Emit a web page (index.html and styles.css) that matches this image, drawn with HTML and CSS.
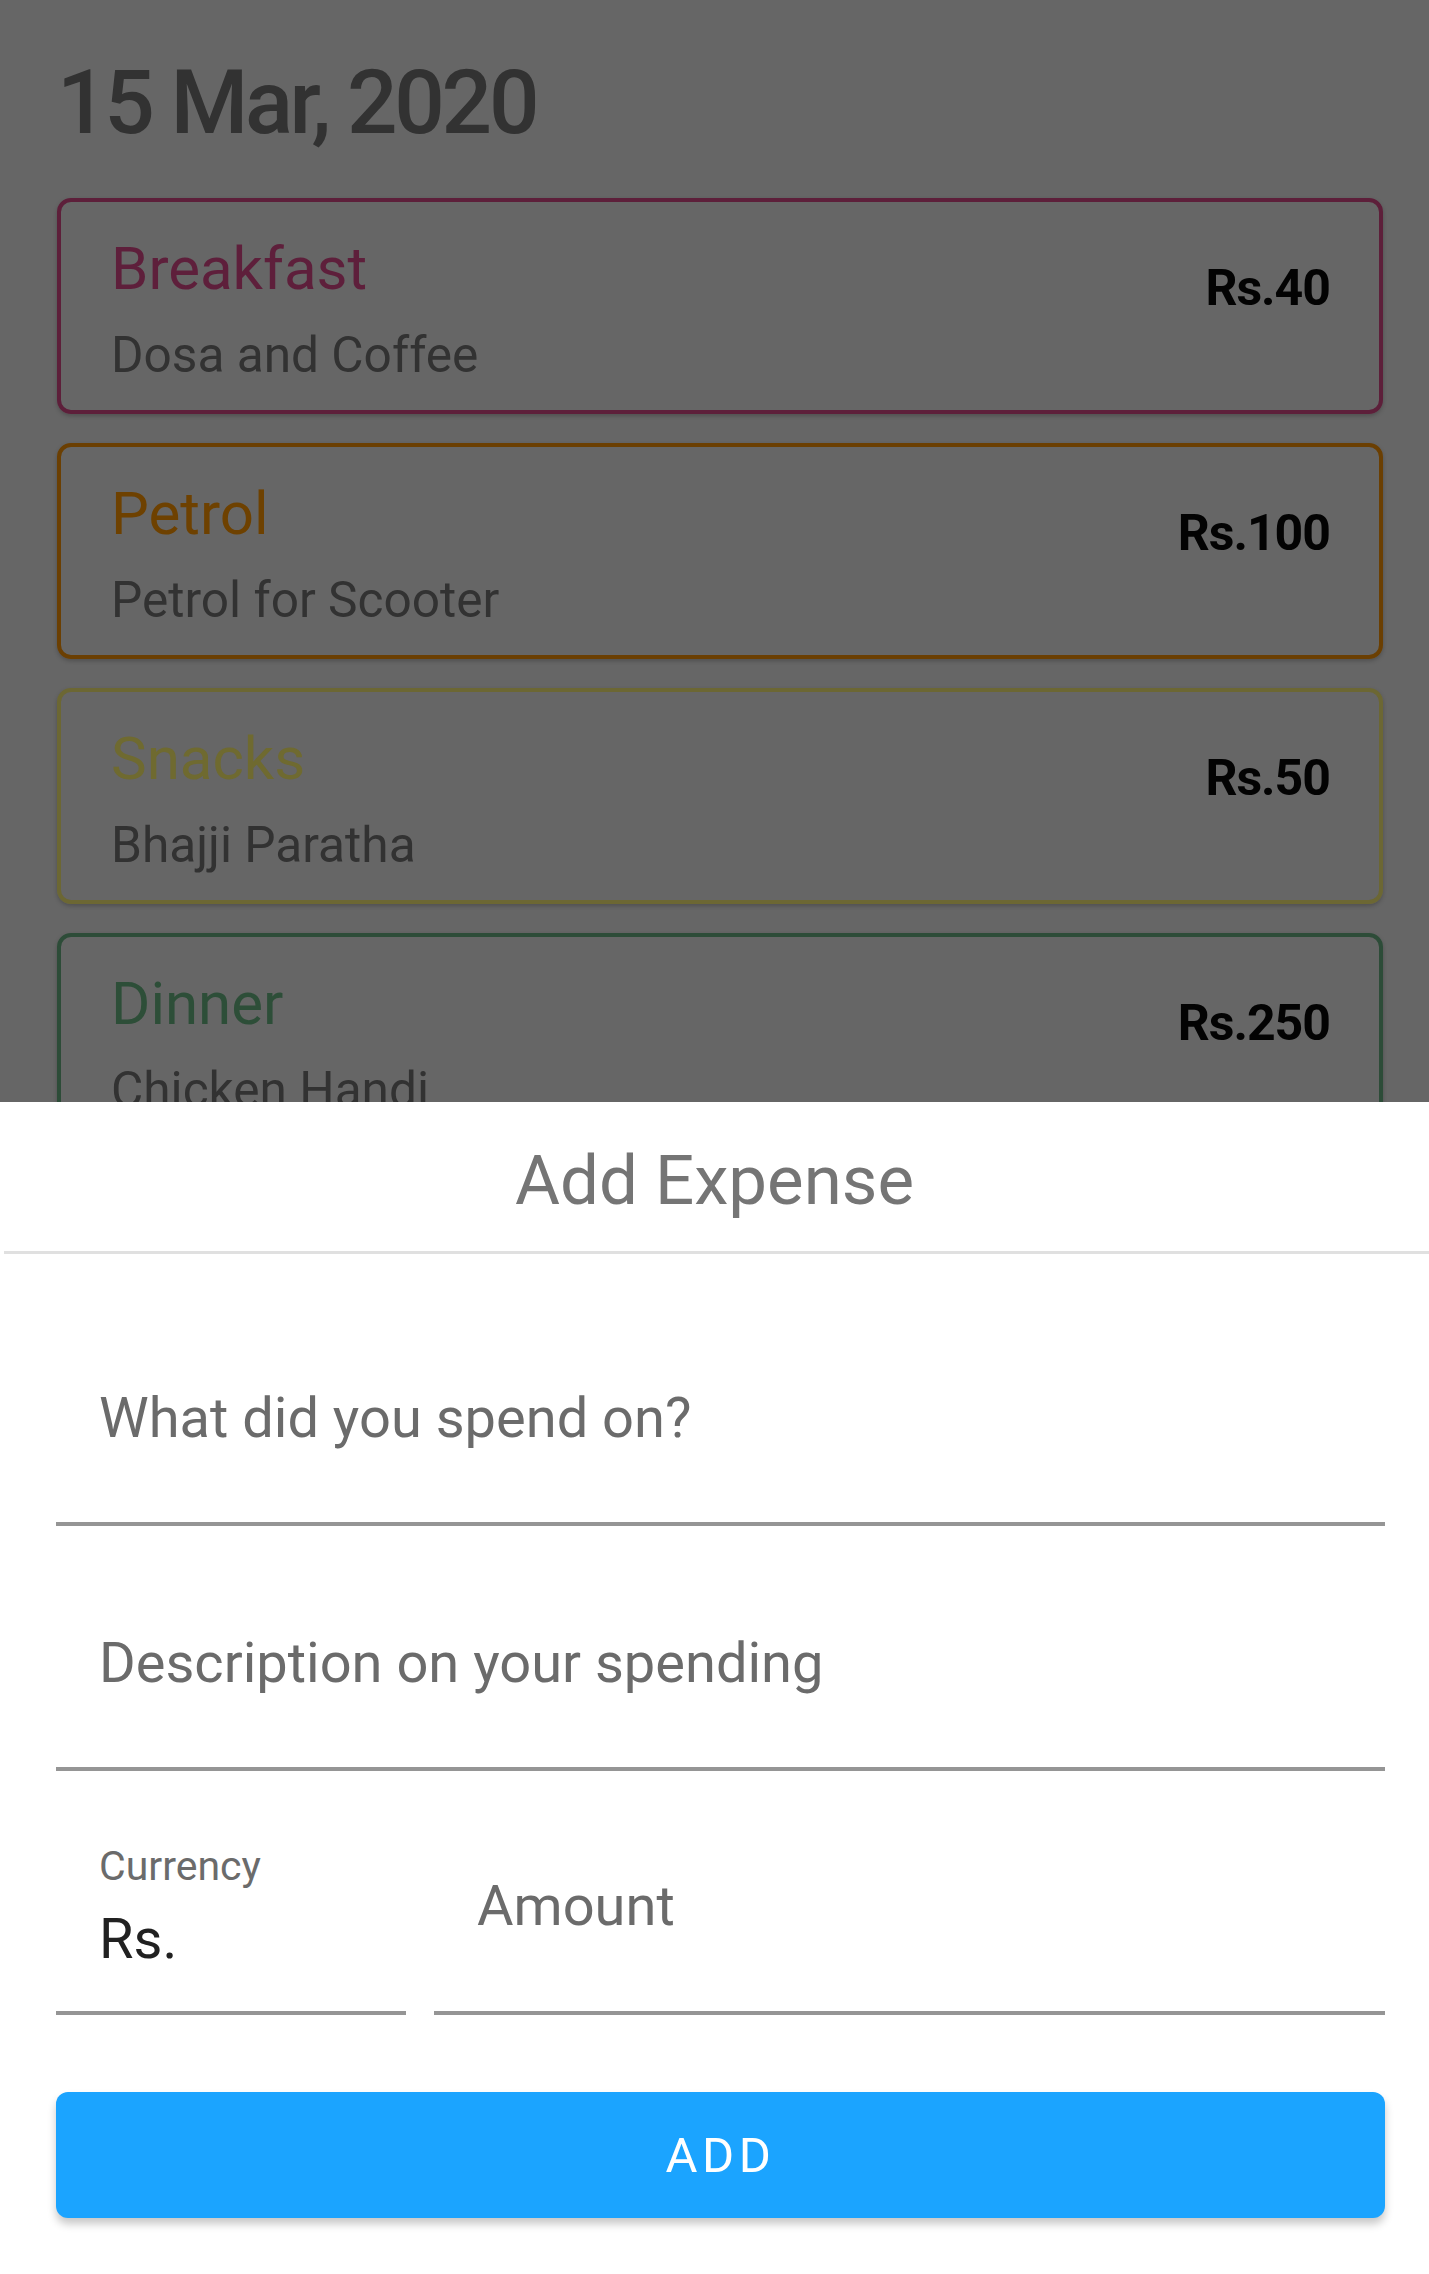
FILE: index.html
```html
<!DOCTYPE html>
<html lang="en">
<head>
<meta charset="utf-8">
<title>Expenses</title>
<link rel="stylesheet" href="styles.css">
</head>
<body>
<div class="screen">
  <section class="list-area">
    <h1 class="date">15 Mar, 2020</h1>
    <div class="cards">
      <div class="card card-breakfast">
        <div class="card-text">
          <div class="card-title">Breakfast</div>
          <div class="card-desc">Dosa and Coffee</div>
        </div>
        <div class="card-price">Rs.40</div>
      </div>
      <div class="card card-petrol">
        <div class="card-text">
          <div class="card-title">Petrol</div>
          <div class="card-desc">Petrol for Scooter</div>
        </div>
        <div class="card-price">Rs.100</div>
      </div>
      <div class="card card-snacks">
        <div class="card-text">
          <div class="card-title">Snacks</div>
          <div class="card-desc">Bhajji Paratha</div>
        </div>
        <div class="card-price">Rs.50</div>
      </div>
      <div class="card card-dinner">
        <div class="card-text">
          <div class="card-title">Dinner</div>
          <div class="card-desc">Chicken Handi</div>
        </div>
        <div class="card-price">Rs.250</div>
      </div>
    </div>
  </section>
  <section class="sheet">
    <div class="sheet-header">Add Expense</div>
    <div class="sheet-divider"></div>
    <div class="form">
      <div class="field field-first">
        <div class="placeholder">What did you spend on?</div>
      </div>
      <div class="field">
        <div class="placeholder">Description on your spending</div>
      </div>
      <div class="field-row">
        <div class="field field-currency">
          <div class="field-label">Currency</div>
          <div class="field-value">Rs.</div>
        </div>
        <div class="field field-amount">
          <div class="placeholder">Amount</div>
        </div>
      </div>
      <button class="add-button">ADD</button>
    </div>
  </section>
</div>
</body>
</html>
```

FILE: styles.css
```css
* {
  box-sizing: border-box;
}

html, body {
  margin: 0;
  padding: 0;
}

body {
  width: 1429px;
  height: 2274px;
  overflow: hidden;
  background: #ffffff;
  font-family: Roboto, "Liberation Sans", sans-serif;
}

.screen {
  display: flex;
  flex-direction: column;
  height: 2274px;
}

/* ---------- dimmed list behind the sheet ---------- */
.list-area {
  height: 1102px;
  flex: 0 0 1102px;
  overflow: hidden;
  background: #666666;
  padding: 50px 46px 0 57px;
}

.date {
  margin: 0 0 43px 0;
  font-size: 89px;
  font-weight: 500;
  line-height: normal;
  letter-spacing: -3.3px;
  color: #323232;
}

.cards {
  display: flex;
  flex-direction: column;
  gap: 29px;
}

.card {
  display: flex;
  align-items: flex-start;
  justify-content: space-between;
  height: 216px;
  flex: 0 0 216px;
  border: 4px solid;
  border-radius: 14px;
  padding: 31px 49px 0 50px;
  box-shadow: 0 2px 4px rgba(0, 0, 0, 0.22);
}

.card-text {
  display: flex;
  flex-direction: column;
}

.card-title {
  font-size: 60px;
  line-height: normal;
}

.card-desc {
  margin-top: 22px;
  font-size: 49.6px;
  line-height: normal;
  color: #323232;
}

.card-price {
  margin-top: 26px;
  font-size: 50px;
  font-weight: 700;
  line-height: normal;
  letter-spacing: -1px;
  color: #030303;
}

.card-breakfast { border-color: #5d1f3a; }
.card-breakfast .card-title { color: #5e1f3b; }

.card-petrol { border-color: #6b3f02; }
.card-petrol .card-title { color: #6e4100; }

.card-snacks { border-color: #6c6733; }
.card-snacks .card-title { color: #6f6a30; }

.card-dinner { border-color: #2d4c38; }
.card-dinner .card-title { color: #2d4e38; }

/* ---------- bottom sheet ---------- */
.sheet {
  flex: 1 1 auto;
  background: #ffffff;
  display: flex;
  flex-direction: column;
}

.sheet-header {
  padding: 38px 0 30px 0;
  text-align: center;
  font-size: 69px;
  line-height: normal;
  color: #757575;
}

.sheet-divider {
  height: 3px;
  margin-left: 4px;
  background: #e0e0e0;
}

.form {
  padding: 0 44px 0 56px;
  display: flex;
  flex-direction: column;
}

.field {
  margin-top: 104px;
  padding: 0 0 71px 43px;
  border-bottom: 4px solid #959595;
}

.field-first {
  margin-top: 131px;
}

.placeholder {
  font-size: 56px;
  line-height: normal;
  color: #6b6b6b;
}

.field-row {
  display: flex;
  gap: 28px;
  align-items: flex-end;
  margin-top: 71px;
}

.field-row .field {
  margin-top: 0;
}

.field-currency {
  width: 350px;
  flex: 0 0 350px;
  padding-bottom: 39px;
}

.field-amount {
  flex: 1 1 auto;
  padding-bottom: 72px;
}

.field-label {
  font-size: 41px;
  line-height: normal;
  color: #6b6b6b;
}

.field-value {
  margin-top: 16px;
  font-size: 56px;
  line-height: normal;
  color: #212121;
}

.add-button {
  margin-top: 77px;
  height: 126px;
  width: 100%;
  border: none;
  border-radius: 12px;
  background: #1ba4ff;
  color: #ffffff;
  font-family: Roboto, "Liberation Sans", sans-serif;
  font-size: 49px;
  font-weight: 400;
  letter-spacing: 4.5px;
  box-shadow: 0 6px 8px rgba(0, 0, 0, 0.22);
}
```
